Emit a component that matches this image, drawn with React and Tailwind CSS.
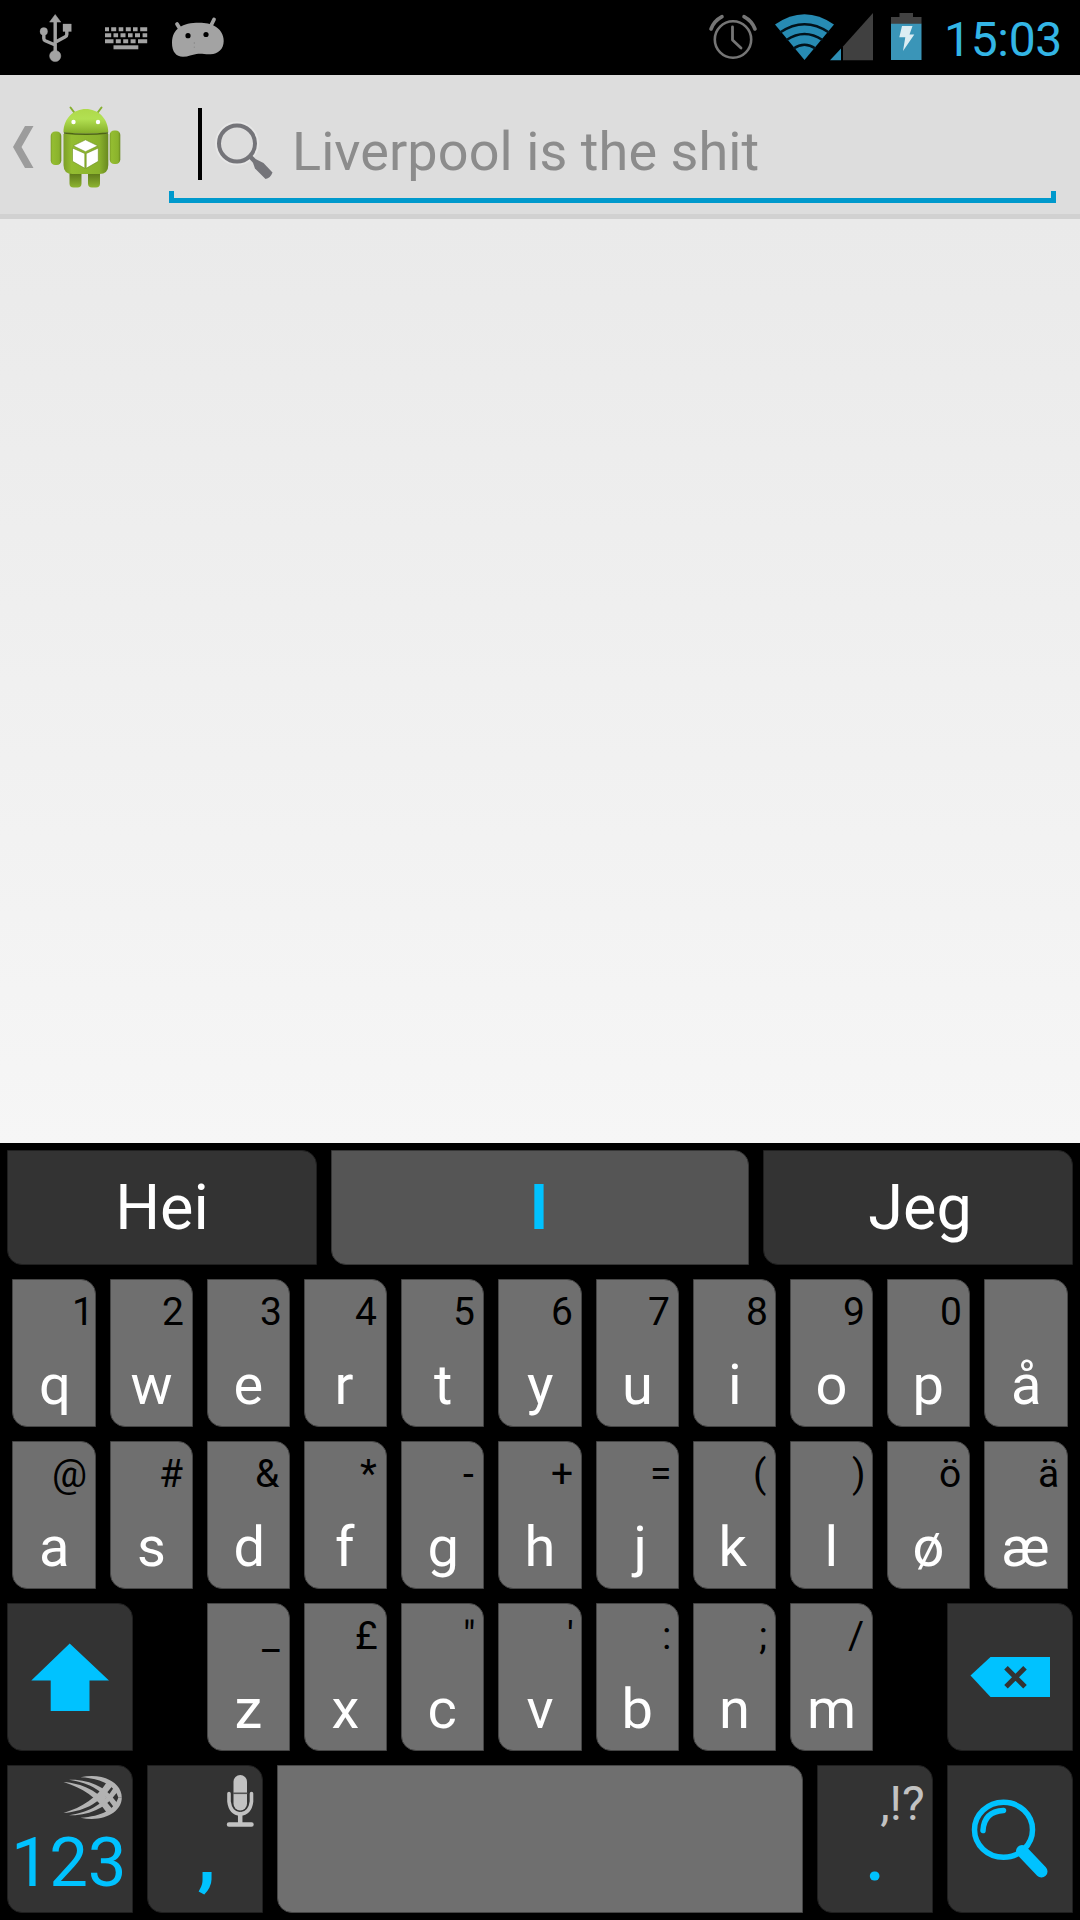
import React from "react";

const measurer = document.createElement("canvas").getContext("2d");

// Returns the side bearings of a string so its ink can be aligned optically.
function inkMetrics(text, size, weight = 400) {
  measurer.font = `${weight} ${size}px Roboto`;
  const m = measurer.measureText(text);
  return {
    right: m.width - m.actualBoundingBoxRight,
    center: m.width / 2 - (m.actualBoundingBoxRight - m.actualBoundingBoxLeft) / 2,
  };
}

const ROW_1 = [["q", "1"], ["w", "2"], ["e", "3"], ["r", "4"], ["t", "5"], ["y", "6"], ["u", "7"], ["i", "8"], ["o", "9"], ["p", "0"], ["å", ""]];
const ROW_2 = [["a", "@"], ["s", "#"], ["d", "&"], ["f", "*"], ["g", "-"], ["h", "+"], ["j", "="], ["k", "("], ["l", ")"], ["ø", "ö"], ["æ", "ä"]];
const ROW_3 = [["z", "_"], ["x", "£"], ["c", '"'], ["v", "'"], ["b", ":"], ["n", ";"], ["m", "/"]];

function Key({ dark = false, className = "", children }) {
  return (
    <div
      className={`h-[148px] rounded-tr-[15px] rounded-bl-[15px] border ${dark ? "border-[#1f1f1f] bg-[#333333]" : "border-[#454545] bg-[#6f6f6f]"} ${className}`}
    >
      {children}
    </div>
  );
}

function LetterKey({ letter, hint }) {
  const main = inkMetrics(letter, 56);
  const alt = inkMetrics(hint || " ", 39);
  return (
    <Key className="flex flex-col">
      <div className="mt-[13px] h-[38px] text-right text-[39px] leading-none text-black">
        <span className="inline-block" style={{ marginRight: hint ? 9 - alt.right : 0 }}>{hint}</span>
      </div>
      <div className="mt-[26px] text-center text-[56px] leading-none text-white">
        <span className="inline-block" style={{ transform: `translateX(${main.center}px)` }}>{letter}</span>
      </div>
    </Key>
  );
}

function StatusBar() {
  return (
    <header className="flex h-[75px] bg-black">
      <svg className="ml-[38px]" width="36" height="75" viewBox="38 0 36 75" fill="#a3a3a3" stroke="#a3a3a3">
        <circle cx="55.2" cy="56" r="5.6" strokeWidth="0.5" />
        <path d="M55.2 14.5l5.6 7.6H49.6z" strokeWidth="0.5" />
        <path d="M55.2 20v34M43.8 31v7.5q0 1.500 1.500 2.200l9.900 4.300M66.800 28v6.500q0 1.500-1.500 2.200l-10.100 5.500" fill="none" strokeWidth="3.400" />
        <circle cx="43.800" cy="31.400" r="3.800" strokeWidth="0.3" />
        <path d="M63 24h8.300v7.500H63z" strokeWidth="0.3" />
      </svg>
      <svg className="ml-[31px]" width="43" height="75" viewBox="105 0 43 75" fill="#a3a3a3">
        <path d="M105 27.300h4v4h-4zM111.200 27.300h5v4h-5zM118.700 27.300h4.600v4h-4.600zM125.800 27.300h5v4h-5zM133 27.300h4.600v4h-4.600zM140.200 27.300h7v4h-7z" />
        <path d="M105 33.300h6.200v4H105zM113.500 33.300h4.600v4h-4.600zM120.500 33.300h5v4h-5zM128 33.300h4.600v4h-4.600zM135 33.300h5v4h-5zM142.600 33.300h4.600v4h-4.600z" />
        <path d="M105 39.300h8.500v4H105zM115.800 39.300h5v4h-5zM123.200 39.300h5v4h-5zM130.600 39.300h5v4h-5zM138 39.300h9.200v4H138z" />
        <path d="M113.500 45.300h24.800v4h-24.800z" />
      </svg>
      <svg className="ml-[24px]" width="53" height="75" viewBox="172 0 53 75">
        <path d="M177 24l5 8M214 19.500l-3.500 7" stroke="#a3a3a3" strokeWidth="3.800" strokeLinecap="round" />
        <path d="M179.500 27.500C184 24 191 22.700 199 22.700c7 0 11.500 1 15 3 6 3 9.700 8.500 9.700 15.300 0 8-5.500 13-13.200 13.200-6 .2-9-.9-14-.2-4.500.7-8 2.700-13.500 2.700-7 0-11-5-11-13.700 0-7.500 2.800-12.700 7.500-15.500z" fill="#a3a3a3" />
        <circle cx="188" cy="35.700" r="2.600" />
        <circle cx="206" cy="34.500" r="2.600" />
        <path d="M194.300 42v2M194.300 46.500v1.500" stroke="#8d8d8d" strokeWidth="1" />
      </svg>
      <svg className="ml-auto" width="50" height="75" viewBox="708 0 50 75" fill="none" stroke="#757575">
        <circle cx="733" cy="39.500" r="18.200" strokeWidth="2.600" />
        <path d="M732.500 27v13l8.500 8" strokeWidth="2.800" strokeLinecap="round" strokeLinejoin="round" />
        <path d="M711 29q3-8 11-12.300M755 29q-3-8-11-12.300" strokeWidth="3.600" strokeLinecap="round" />
      </svg>
      <svg className="ml-[16px]" width="61" height="75" viewBox="774 0 61 75">
        <path d="M775 24.500Q804.500 4 834 24.500L804.500 60z" fill="#278bb3" />
        <path d="M780 32.500q24.500-16.500 49 0M786.500 40q18-12 36 0M793.500 48.500q11-7.500 22 0" fill="none" stroke="#02121a" strokeWidth="2.600" />
      </svg>
      <svg className="-ml-[6px]" width="45" height="75" viewBox="829 0 45 75">
        <path d="M830 60.300L841 48.500v11.800z" fill="#2e8fb5" />
        <path d="M843 46.500L873 13v47.300h-30z" fill="#404040" />
      </svg>
      <svg className="ml-[17px]" width="31" height="75" viewBox="891 0 31 75">
        <path d="M891 24v-7h8.500v-4H913v4h8.500v7z" fill="#424242" />
        <path d="M891 23.700h30.500V60H891z" fill="#3a95b8" />
        <path d="M902 26h10.500l-3 8.500h4.800L903 51l2.300-13.700h-6z" fill="#dcedf3" />
      </svg>
      <div className="mr-[18px] ml-[22px] w-[118px] pt-[16px] text-right text-[48px] leading-none tracking-[-0.300px] text-[#33b5e5]">15:03</div>
    </header>
  );
}

function AndroidIcon() {
  return (
    <svg width="72" height="84" viewBox="50 105 72 84">
      <defs>
        <linearGradient id="head" x1="0" x2="0" y1="0" y2="1">
          <stop offset="0" stopColor="#aed94a" />
          <stop offset="0.400" stopColor="#b2e052" />
          <stop offset="1" stopColor="#83ac27" />
        </linearGradient>
        <linearGradient id="body" x1="0" x2="1" y1="0" y2="0">
          <stop offset="0" stopColor="#7c9f28" />
          <stop offset="0.180" stopColor="#94bd31" />
          <stop offset="0.800" stopColor="#8ab22c" />
          <stop offset="1" stopColor="#69891f" />
        </linearGradient>
        <linearGradient id="leg" x1="0" x2="0" y1="0" y2="1">
          <stop offset="0" stopColor="#566f16" />
          <stop offset="1" stopColor="#8db431" />
        </linearGradient>
      </defs>
      <path d="M70.500 107.500l4.500 6M101.500 107.500l-4.500 6" stroke="#86b02f" strokeWidth="2" strokeLinecap="round" />
      <path d="M69.500 171h12v12.500q0 4-4 4h-4q-4 0-4-4zM88 171h12v12.500q0 4-4 4h-4q-4 0-4-4z" fill="url(#leg)" />
      <rect x="50.700" y="131.500" width="10.600" height="33.500" rx="4.500" fill="url(#body)" />
      <rect x="109.700" y="130.500" width="10.600" height="33.500" rx="4.500" fill="url(#body)" />
      <path d="M63.500 134h44.800v31q0 9-9 9H72.500q-9 0-9-9z" fill="url(#body)" />
      <path d="M63.500 132.500C63.500 118 74 109 85.800 109s22.500 9 22.500 23.500q-22.400 2.500-44.800 0z" fill="url(#head)" />
      <path d="M64 133q22 2.500 44 0" stroke="#4d6515" strokeWidth="1.500" fill="none" />
      <circle cx="73.500" cy="122" r="2.200" fill="#fff" />
      <circle cx="98" cy="122" r="2.200" fill="#fff" />
      <path d="M85.500 139.800l12.300 6-12.300 5.900-12.300-5.900z" fill="#fff" stroke="#6c8e20" strokeWidth="0.600" />
      <path d="M72.500 148l12.300 5.500v14.800l-12.300-7zM98.300 148l-12.100 5.500v14.800l12.100-7z" fill="#fff" stroke="#6c8e20" strokeWidth="0.600" />
    </svg>
  );
}

function ActionBar() {
  return (
    <div className="flex h-[144px] border-b-[5px] border-[#d1d1d1] bg-[#dddddd]">
      <svg className="mt-[51px] ml-[13px]" width="21" height="42" viewBox="13 126 21 42">
        <path d="M25 126h8.500L21.500 147l12 21H25L13 147z" fill="#9c9c9c" />
      </svg>
      <div className="mt-[30px] ml-[16px]"><AndroidIcon /></div>
      <div className="mt-[33px] ml-[47px] flex h-[95px] w-[887px] flex-col">
        <div className="flex h-[83px]">
          <div className="ml-[29px] h-[72px] w-1 bg-black" />
          <svg className="mt-[13px] ml-[13px]" width="60" height="62" viewBox="215 121 60 62" fill="none" stroke="#747479">
            <circle cx="237" cy="143.500" r="21" stroke="#e6e6e6" strokeWidth="2" />
            <circle cx="237" cy="143.500" r="18" strokeWidth="4" />
            <path d="M249 155.500l6 6" strokeWidth="4.500" />
            <path d="M252.500 161.500q1-2.500 4-2l7 3.500 9 9.500q-2 5.500-7 6.500l-10.500-10.500z" fill="#747479" stroke="none" />
          </svg>
          <div className="mt-[17px] ml-[17px] text-[54px] leading-none tracking-[0.080px] whitespace-nowrap text-[#8c8c8c]">Liverpool is the shit</div>
        </div>
        <div className="h-3 border-x-[5px] border-b-[5px] border-[#0099cc]" />
      </div>
    </div>
  );
}

function Suggestion({ className, children }) {
  return (
    <div className={`flex h-[115px] items-center justify-center rounded-tr-[15px] rounded-bl-[15px] border text-[63px] leading-none ${className}`}>
      {children}
    </div>
  );
}

// One half of the fan of strands; the other half is its mirror image.
function LogoStrands() {
  return (
    <>
      <path d="M63.500 1782C82 1783.500 98 1790 112 1808.500L107 1813C96 1797 83 1788 63.500 1782z" />
      <path d="M69 1779.800C90 1779 108 1788 118 1804.500L114.500 1808.500C104 1791.500 91 1783 69 1779.800z" />
      <path d="M80.500 1777.300C104 1772.500 121.800 1783 121.800 1797.500H118.300C115 1786 102 1778.500 80.500 1777.300z" />
    </>
  );
}

function SwiftLogo() {
  return (
    <svg width="60" height="46" viewBox="63 1775 60 46" fill="#b3b3b3">
      <LogoStrands />
      <g transform="translate(0 3595) scale(1 -1)"><LogoStrands /></g>
      <path d="M95 1797.500l7-6.500 4.500 6.500-4.500 6.500z" />
    </svg>
  );
}

function Keyboard() {
  const punct = inkMetrics(",!?", 48);
  return (
    <div className="flex h-[777px] flex-col gap-[14px] bg-black pt-[7px]">
      <div className="grid grid-cols-[310px_418px_310px] gap-[14px] px-[7px]">
        <Suggestion className="border-[#1f1f1f] bg-[#333333] text-white">Hei</Suggestion>
        <Suggestion className="border-[#353535] bg-[#555555] pr-[2px] font-bold text-[#00c2ff]">I</Suggestion>
        <Suggestion className="border-[#1f1f1f] bg-[#333333] pl-[4px] text-white">Jeg</Suggestion>
      </div>
      {[ROW_1, ROW_2].map((row, i) => (
        <div key={i} className="grid grid-cols-[84px_repeat(4,83px)_84px_repeat(4,83px)_84px] gap-[14px] px-3">
          {row.map(([letter, hint]) => <LetterKey key={letter} letter={letter} hint={hint} />)}
        </div>
      ))}
      <div className="flex justify-between px-[7px]">
        <Key dark className="w-[126px]">
          <svg width="124" height="146" viewBox="8 1604 124 146">
            <path d="M69.700 1643.500L109 1680.500H89.500V1711H50.700V1680.500H31.300z" fill="#00c2ff" />
          </svg>
        </Key>
        <div className="grid grid-cols-[repeat(3,83px)_84px_repeat(3,83px)] gap-[14px]">
          {ROW_3.map(([letter, hint]) => <LetterKey key={letter} letter={letter} hint={hint} />)}
        </div>
        <Key dark className="w-[126px]">
          <svg width="124" height="146" viewBox="948 1604 124 146">
            <path d="M970.500 1675.500L990.500 1657H1050v40H990.500z" fill="#00c2ff" />
            <path d="M1006 1667.800l19 19M1025 1667.800l-19 19" stroke="#333333" strokeWidth="5" />
          </svg>
        </Key>
      </div>
      <div className="grid grid-cols-[126px_116px_526px_116px_126px] gap-[14px] px-[7px]">
        <Key dark className="flex flex-col">
          <div className="mt-[9px] flex h-[46px] justify-end pr-[9px]"><SwiftLogo /></div>
          <div className="mt-[7px] pr-[3px] text-center text-[69px] leading-none tracking-[-0.500px] text-[#00c2ff]">123</div>
        </Key>
        <Key dark className="flex flex-col">
          <div className="flex h-[61px] justify-end pr-[8px]">
            <svg width="28" height="61" viewBox="226 1766 28 61">
              <rect x="233.500" y="1775" width="13.500" height="35.500" rx="6.700" fill="#c2c2c2" />
              <path d="M233 1793.300h14.500" stroke="#555" strokeWidth="1.600" />
              <path d="M229 1793.500v8q1.500 12 11.200 12.500q9.800-.5 11.300-12.500v-8" fill="none" stroke="#c2c2c2" strokeWidth="3.600" strokeLinecap="round" />
              <path d="M240.200 1814v9M229 1824.500h22.500" stroke="#c2c2c2" strokeWidth="4.500" strokeLinecap="round" />
            </svg>
          </div>
          <div className="-mt-[10px] pl-[3px] text-center text-[76px] leading-none font-bold text-[#00c2ff]">,</div>
        </Key>
        <Key />
        <Key dark className="flex flex-col">
          <div className="mt-[14px] h-12 text-right text-[48px] leading-none text-[#c2c2c2]">
            <span className="inline-block" style={{ marginRight: 9 - punct.right }}>,!?</span>
          </div>
          <div className="-mt-[7px] text-center text-[70px] leading-none font-medium text-[#00c2ff]">.</div>
        </Key>
        <Key dark>
          <svg width="124" height="146" viewBox="948 1766 124 146" fill="none" stroke="#00c2ff">
            <ellipse cx="1003.500" cy="1829.800" rx="29" ry="27.500" strokeWidth="5.500" />
            <path d="M983 1830.500q1-19 20.500-20" strokeWidth="5.500" strokeLinecap="round" />
            <path d="M1022 1851l19.500 20.500" strokeWidth="12" strokeLinecap="round" />
          </svg>
        </Key>
      </div>
    </div>
  );
}

export default function App() {
  return (
    <div className="flex h-[1920px] w-[1080px] flex-col overflow-hidden font-[Roboto,sans-serif]">
      <StatusBar />
      <ActionBar />
      <main className="flex-1 bg-linear-to-b from-[#eaeaea] to-[#f6f6f6]" />
      <Keyboard />
    </div>
  );
}
